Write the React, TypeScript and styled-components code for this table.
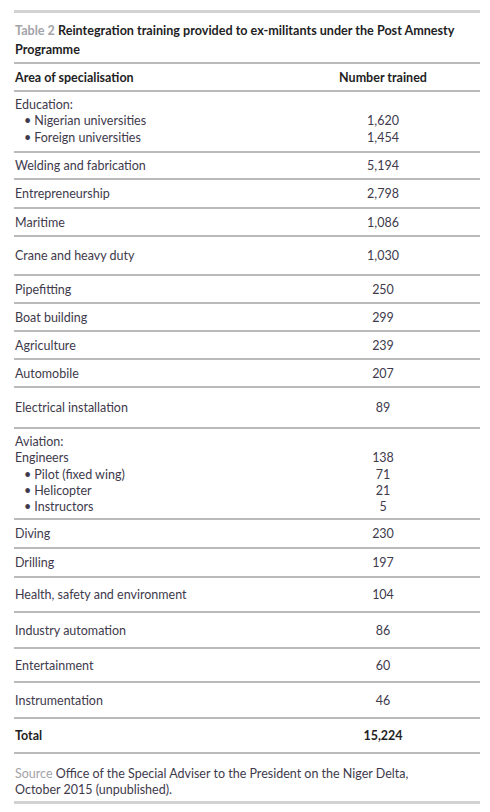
import * as React from 'react';
import styled, { createGlobalStyle } from 'styled-components';

const GlobalStyle = createGlobalStyle`
  body {
    margin: 0;
    background: #ffffff;
    font-family: Lato, "Liberation Sans", sans-serif;
    color: #403a4c;
  }
`;

const Page = styled.div`
  width: 466px;
  padding: 10px 10px 0 14px;
`;

const Bar = styled.div`
  height: 3px;
  background: #d2d2d2;
`;

const Caption = styled.div`
  padding: 9px 0 3px 1px;
  font-size: 12.6px;
  line-height: 18.5px;
  font-weight: 700;
  color: #1e1e24;
  border-bottom: 2px solid #bababa;
`;

const CaptionLabel = styled.span`
  color: #a3a3a8;
`;

const Row = styled.div<{ $h: number; $pad?: boolean }>`
  display: grid;
  grid-template-columns: 1fr 194px;
  box-sizing: border-box;
  height: ${p => p.$h}px;
  align-items: ${p => (p.$pad ? 'start' : 'center')};
  padding: ${p => (p.$pad ? '5px 0 0 1px' : '0 0 0 1px')};
  border-bottom: 2px solid #bababa;
  font-size: 12.5px;
`;

const HeadRow = styled(Row)`
  font-weight: 700;
  color: #1e1e24;
`;

const Label = styled.div``;

const Num = styled.div`
  text-align: center;
`;

const Line = styled.div`
  line-height: 16.3px;
`;

const Sub = styled.div`
  line-height: 16.3px;
  padding-left: 9px;
  &::before {
    content: '•';
    margin-right: 3px;
  }
`;

const Source = styled.div`
  padding: 12px 0 3px 1px;
  font-size: 12.5px;
  line-height: 16px;
`;

const SourceLabel = styled.span`
  color: #a3a3a8;
`;

type Item = { label: string; value: string; h: number };

const singles: Item[] = [
  { label: 'Welding and fabrication', value: '5,194', h: 27 },
  { label: 'Entrepreneurship', value: '2,798', h: 29 },
  { label: 'Maritime', value: '1,086', h: 28 },
  { label: 'Crane and heavy duty', value: '1,030', h: 39 },
  { label: 'Pipefitting', value: '250', h: 28 },
  { label: 'Boat building', value: '299', h: 28 },
  { label: 'Agriculture', value: '239', h: 28 },
  { label: 'Automobile', value: '207', h: 28 },
  { label: 'Electrical installation', value: '89', h: 41 }
];

const later: Item[] = [
  { label: 'Diving', value: '230', h: 29 },
  { label: 'Drilling', value: '197', h: 29 },
  { label: 'Health, safety and environment', value: '104', h: 35 },
  { label: 'Industry automation', value: '86', h: 36 },
  { label: 'Entertainment', value: '60', h: 34 },
  { label: 'Instrumentation', value: '46', h: 36 }
];

const renderRows = (items: Item[]) =>
  items.map(item => (
    <Row key={item.label} $h={item.h}>
      <Label>{item.label}</Label>
      <Num>{item.value}</Num>
    </Row>
  ));

export default function App() {
  return (
    <Page>
      <GlobalStyle />
      <Bar />
      <Caption>
        <CaptionLabel>Table 2</CaptionLabel> Reintegration training provided to ex-militants under the
        Post Amnesty Programme
      </Caption>
      <HeadRow $h={28}>
        <Label>Area of specialisation</Label>
        <Num>Number trained</Num>
      </HeadRow>
      <Row $h={61} $pad>
        <div>
          <Line>Education:</Line>
          <Sub>Nigerian universities</Sub>
          <Sub>Foreign universities</Sub>
        </div>
        <Num>
          <Line>&nbsp;</Line>
          <Line>1,620</Line>
          <Line>1,454</Line>
        </Num>
      </Row>
      {renderRows(singles)}
      <Row $h={91} $pad>
        <div>
          <Line>Aviation:</Line>
          <Line>Engineers</Line>
          <Sub>Pilot (fixed wing)</Sub>
          <Sub>Helicopter</Sub>
          <Sub>Instructors</Sub>
        </div>
        <Num>
          <Line>&nbsp;</Line>
          <Line>138</Line>
          <Line>71</Line>
          <Line>21</Line>
          <Line>5</Line>
        </Num>
      </Row>
      {renderRows(later)}
      <HeadRow $h={35}>
        <Label>Total</Label>
        <Num>15,224</Num>
      </HeadRow>
      <Source>
        <SourceLabel>Source</SourceLabel> Office of the Special Adviser to the President on the Niger
        Delta,
        <br />
        October 2015 (unpublished).
      </Source>
      <Bar />
    </Page>
  );
}
